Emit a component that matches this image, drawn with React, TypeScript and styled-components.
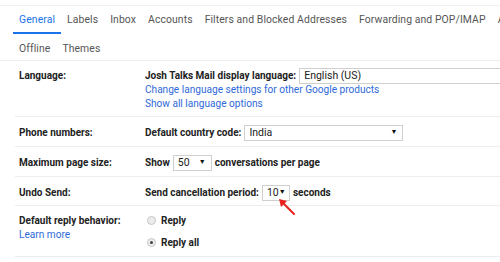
import React from "react";
import styled, { createGlobalStyle } from "styled-components";

const GlobalStyle = createGlobalStyle`
  body {
    margin: 0;
    background: #fff;
    font-family: Roboto, "Liberation Sans", Arial, sans-serif;
    color: #222;
  }
`;

const Page = styled.div`
  width: 500px;
  height: 262px;
  overflow: hidden;
  position: relative;
  background: #fff;
`;

const TabBar = styled.div`
  border-top: 1px solid #f1f1f1;
  margin-top: 5px;
  padding-left: 13px;
  border-bottom: 1px solid #eee;
`;

const TabRow = styled.div<{ $h: number }>`
  display: flex;
  white-space: nowrap;
  height: ${(p) => p.$h}px;
`;

const Tab = styled.div<{ $active?: boolean }>`
  padding: 0 6px;
  font-family: Roboto, "Open Sans", sans-serif;
  font-size: 10.4px;
  letter-spacing: 0.1px;
  color: ${(p) => (p.$active ? "#1a73e8" : "#555")};
  display: flex;
  align-items: center;
  box-sizing: border-box;
  height: 28px;
  padding-top: 1px;
  border-bottom: 2px solid ${(p) => (p.$active ? "#1a73e8" : "transparent")};
`;

const Rows = styled.div`
  margin-left: 15px;
`;

const Row = styled.div<{ $h: number; $pt: number }>`
  display: grid;
  grid-template-columns: 130px 1fr;
  height: ${(p) => p.$h}px;
  padding-top: ${(p) => p.$pt}px;
  box-sizing: border-box;
  border-bottom: 1px solid #eee;
  font-size: 10px;
`;

const Label = styled.div`
  padding-left: 4px;
  font-weight: bold;
  line-height: 15px;
  display: flex;
  flex-direction: column;
`;

const Value = styled.div`
  display: flex;
  flex-direction: column;
  line-height: 15px;
  white-space: nowrap;
`;

const Line = styled.div<{ $bold?: boolean }>`
  display: flex;
  align-items: center;
  height: 15px;
  font-weight: ${(p) => (p.$bold ? "bold" : "normal")};
`;

const Link = styled.span`
  color: #2f6ad8;
  font-weight: normal;
  font-size: 10.1px;
  line-height: 14px;
`;

const Select = styled.div<{ $w: number }>`
  width: ${(p) => p.$w}px;
  height: 16px;
  box-sizing: border-box;
  border: 1px solid #d0d0d0;
  display: flex;
  align-items: center;
  justify-content: space-between;
  padding: 0 5px 0 4px;
  margin: 0 3px;
  font-weight: normal;
  font-size: 10.5px;
  color: #222;
  flex-shrink: 0;
`;

const Caret = styled.span`
  font-size: 7px;
  color: #111;
`;

const RadioLine = styled.div`
  display: flex;
  align-items: center;
  height: 15px;
  margin-bottom: 7px;
  font-weight: bold;
  padding-left: 2px;
`;

const Radio = styled.span<{ $on?: boolean }>`
  width: 7px;
  height: 7px;
  border-radius: 50%;
  border: 1px solid #c8c8c8;
  background: #ececec;
  margin-right: 5px;
  display: flex;
  align-items: center;
  justify-content: center;
  &::after {
    content: "";
    width: 3px;
    height: 3px;
    border-radius: 50%;
    background: ${(p) => (p.$on ? "#444" : "transparent")};
  }
`;

const Arrow = styled.svg`
  position: absolute;
  left: 277px;
  top: 197px;
`;

export default function App() {
  return (
    <Page>
      <GlobalStyle />
      <TabBar>
        <TabRow $h={29}>
          <Tab $active>General</Tab>
          <Tab>Labels</Tab>
          <Tab>Inbox</Tab>
          <Tab>Accounts</Tab>
          <Tab>Filters and Blocked Addresses</Tab>
          <Tab>Forwarding and POP/IMAP</Tab>
          <Tab>Add-ons</Tab>
        </TabRow>
        <TabRow $h={25}>
          <Tab>Offline</Tab>
          <Tab>Themes</Tab>
        </TabRow>
      </TabBar>
      <Rows>
        <Row $h={56} $pt={7}>
          <Label>Language:</Label>
          <Value>
            <Line $bold>
              Josh Talks Mail display language:
              <Select $w={260}>English (US)</Select>
            </Line>
            <Link>Change language settings for other Google products</Link>
            <Link>Show all language options</Link>
          </Value>
        </Row>
        <Row $h={30} $pt={8}>
          <Label>Phone numbers:</Label>
          <Value>
            <Line $bold>
              Default country code:
              <Select $w={159}>
                India<Caret>▼</Caret>
              </Select>
            </Line>
          </Value>
        </Row>
        <Row $h={30} $pt={8}>
          <Label>Maximum page size:</Label>
          <Value>
            <Line $bold>
              Show
              <Select $w={39}>
                50<Caret>▼</Caret>
              </Select>
              conversations per page
            </Line>
          </Value>
        </Row>
        <Row $h={29} $pt={8}>
          <Label>Undo Send:</Label>
          <Value>
            <Line $bold>
              Send cancellation period:
              <Select $w={28}>
                10<Caret>▼</Caret>
              </Select>
              seconds
            </Line>
          </Value>
        </Row>
        <Row $h={51} $pt={7}>
          <Label>
            Default reply behavior:
            <Link>Learn more</Link>
          </Label>
          <Value>
            <RadioLine>
              <Radio />
              Reply
            </RadioLine>
            <RadioLine>
              <Radio $on />
              Reply all
            </RadioLine>
          </Value>
        </Row>
      </Rows>
      <Arrow width="20" height="20" viewBox="0 0 20 20">
        <line x1="17" y1="17" x2="6" y2="6" stroke="#e8231f" strokeWidth="2" strokeLinecap="round" />
        <polygon points="2,2 10,4 4,10" fill="#e8231f" />
      </Arrow>
    </Page>
  );
}
